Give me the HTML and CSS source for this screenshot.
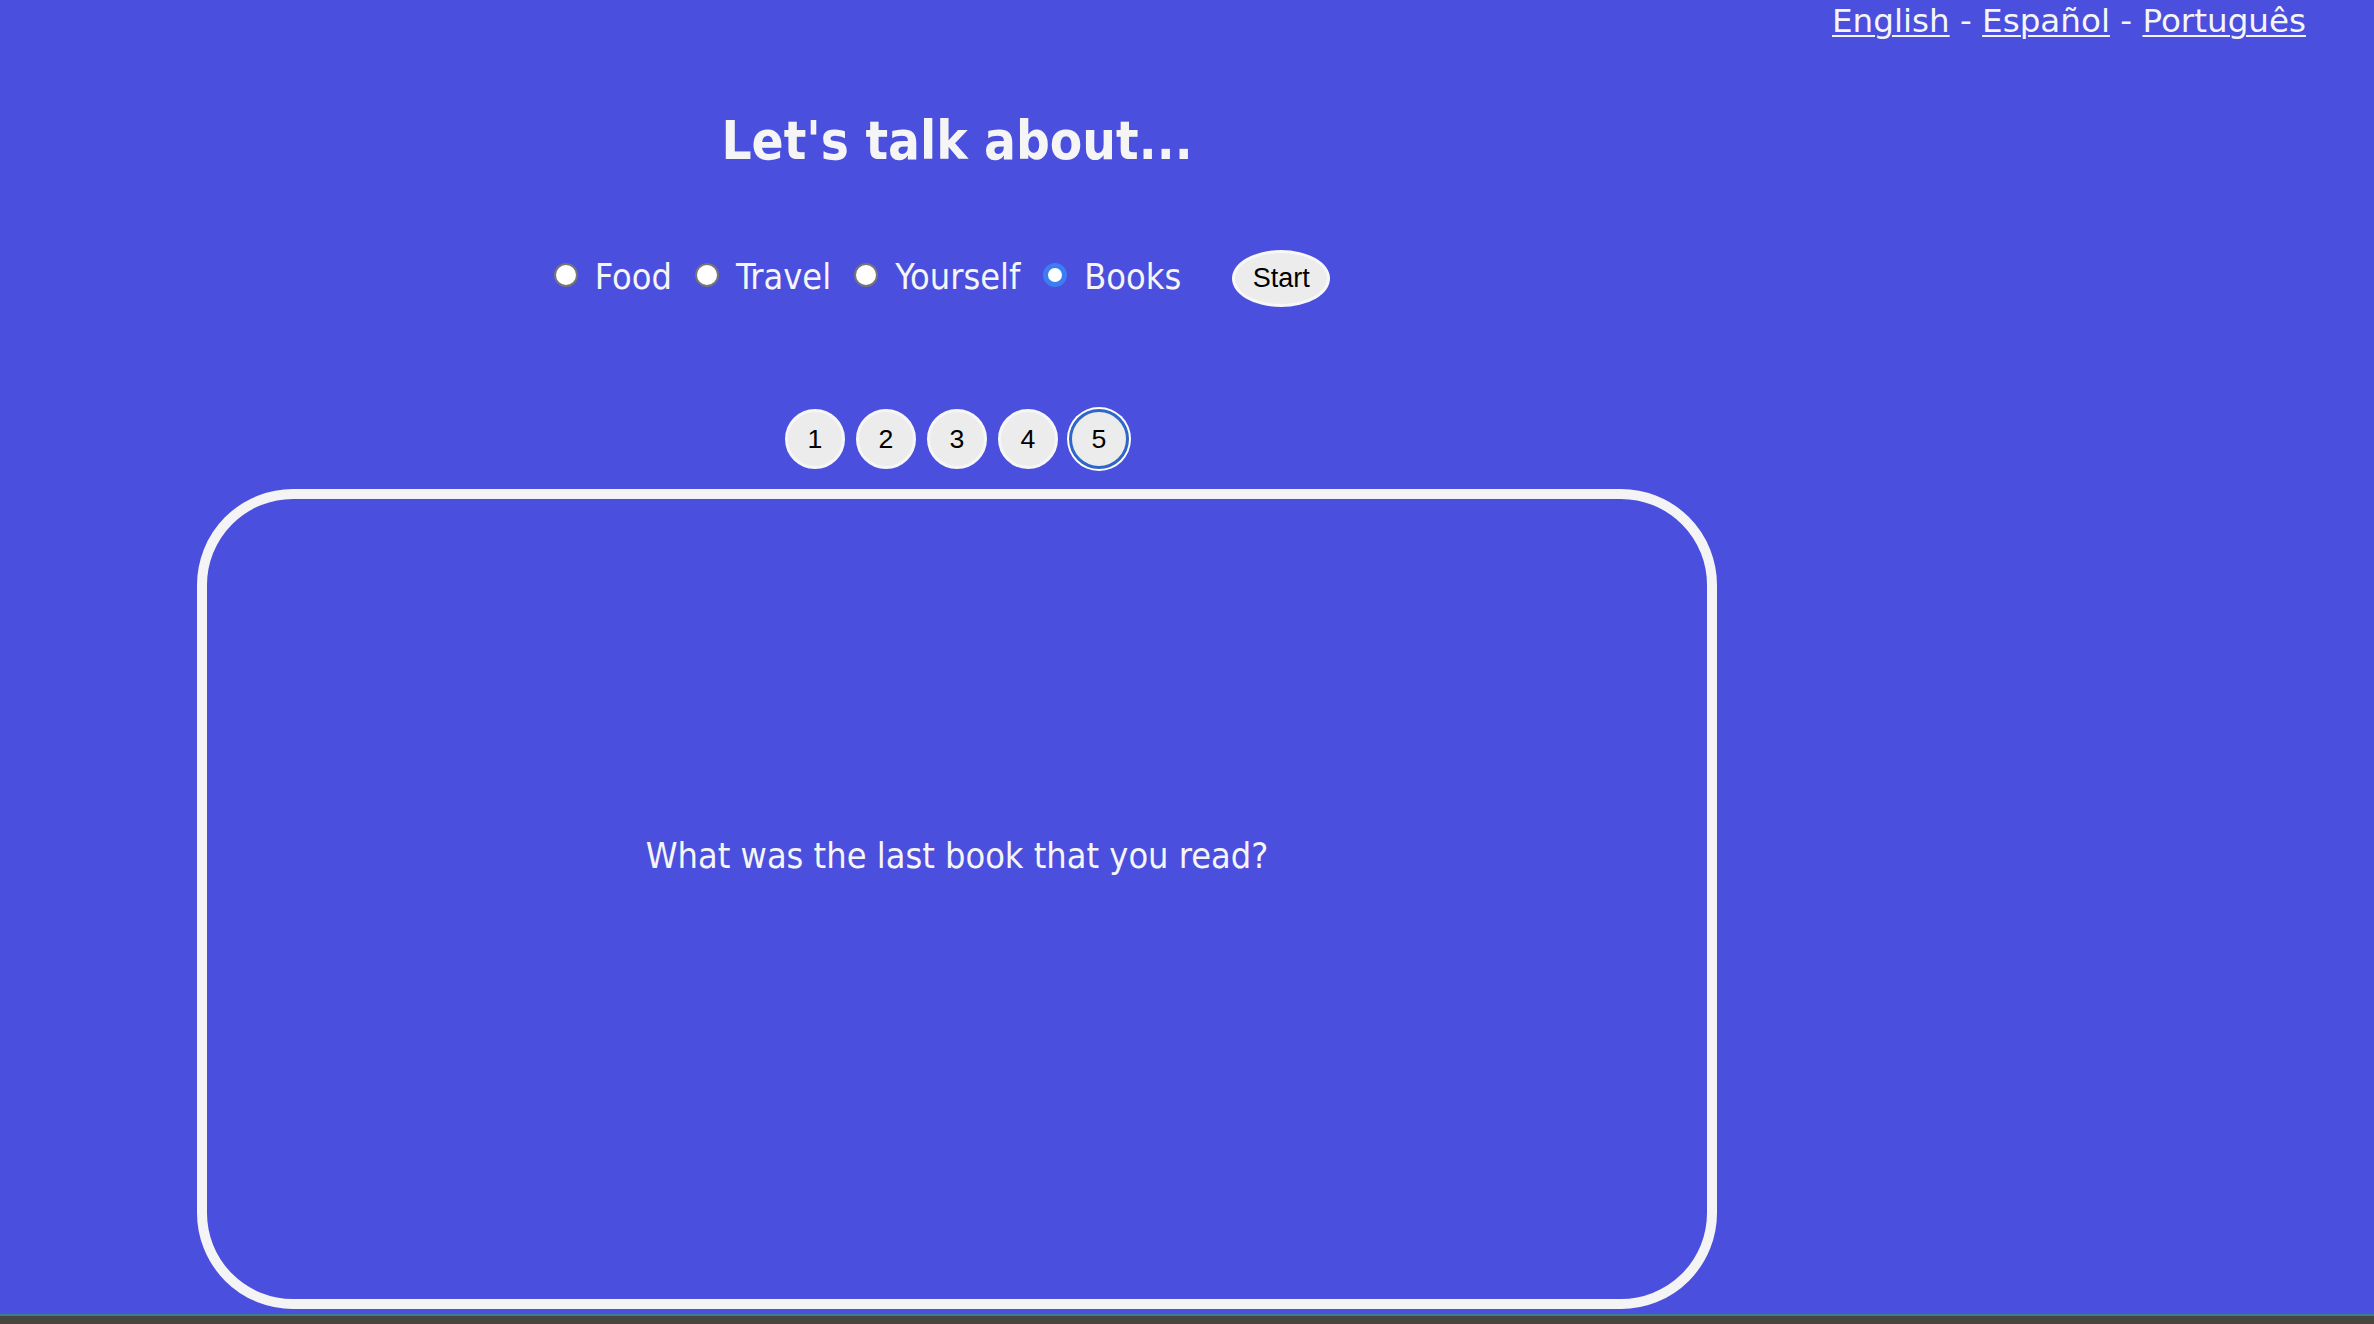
FILE: index.html
```html
<!DOCTYPE html>
<html lang="en">
<head>
<meta charset="utf-8">
<title>Let's talk about...</title>
<link rel="stylesheet" href="styles.css">
</head>
<body>
  <div class="lang">
    <a href="#">English</a> - <a href="#">Español</a> - <a href="#">Português</a>
  </div>
  <div class="main">
    <h1 class="title">Let's talk about...</h1>
    <form class="topics">
      <input type="radio" name="topic" id="t-food" class="radio">
      <label for="t-food" class="topic-label">Food</label>
      <input type="radio" name="topic" id="t-travel" class="radio">
      <label for="t-travel" class="topic-label">Travel</label>
      <input type="radio" name="topic" id="t-yourself" class="radio">
      <label for="t-yourself" class="topic-label">Yourself</label>
      <input type="radio" name="topic" id="t-books" class="radio radio-checked" checked>
      <label for="t-books" class="topic-label topic-last">Books</label>
      <button type="button" class="start">Start</button>
    </form>
    <div class="pages">
      <button type="button" class="page">1</button>
      <button type="button" class="page">2</button>
      <button type="button" class="page">3</button>
      <button type="button" class="page">4</button>
      <button type="button" class="page page-active">5</button>
    </div>
    <div class="card">
      <p class="question">What was the last book that you read?</p>
    </div>
  </div>
  <div class="dock"></div>
</body>
</html>
```
FILE: styles.css
```css
html, body {
  margin: 0;
  padding: 0;
}

body {
  background: #4b4fdd;
  color: #f5f5f5;
  font-family: "DejaVu Sans", Verdana, sans-serif;
  height: 1324px;
  overflow: hidden;
}

.lang {
  font-family: "DejaVu Sans", Verdana, sans-serif;
  font-size: 32.6px;
  line-height: 38px;
  padding-top: 2px;
  padding-right: 68px;
  text-align: right;
  color: #f5f5f5;
}

.lang a {
  color: #f5f5f5;
  text-decoration: underline;
  text-decoration-thickness: 2px;
  text-underline-offset: 3px;
}

.main {
  margin-left: 197px;
  width: 1520px;
}

.title {
  margin: 71px 0 0 0;
  font-family: "DejaVu Sans Condensed", "DejaVu Sans", sans-serif;
  font-stretch: condensed;
  font-weight: bold;
  font-size: 52.6px;
  line-height: 60px;
  text-align: center;
  color: #f5f5f5;
}

.topics {
  margin: 79px 0 0 0;
  padding-right: 30px;
  height: 57px;
  display: flex;
  align-items: center;
  justify-content: center;
}

.radio {
  appearance: none;
  -webkit-appearance: none;
  width: 24px;
  height: 24px;
  margin: 0 17px 7px 0;
  box-sizing: border-box;
  border: 2px solid #767676;
  border-radius: 50%;
  background: #ffffff;
}

.radio-checked {
  border: 5px solid #3b7df2;
  background: #ffffff;
}

.topic-label {
  font-family: "DejaVu Sans Condensed", "DejaVu Sans", sans-serif;
  font-stretch: condensed;
  font-size: 35.8px;
  margin: 0 23px 4px 0;
  color: #f5f5f5;
}

.topic-last {
  margin-right: 51px;
}

.start {
  width: 98px;
  height: 57px;
  box-sizing: border-box;
  border: 3px solid #f7f7f7;
  border-radius: 50%;
  background: #ececec;
  color: #000;
  font-family: "Liberation Sans", Arial, sans-serif;
  font-size: 27px;
  padding: 0;
}

.pages {
  margin-top: 102px;
  display: flex;
  justify-content: center;
  gap: 11px;
}

.page {
  width: 60px;
  height: 60px;
  box-sizing: border-box;
  border: 3px solid #f6f6f6;
  border-radius: 50%;
  background: #ececec;
  color: #000;
  font-family: "Liberation Sans", Arial, sans-serif;
  font-size: 26.67px;
  padding: 0;
}

.page-active {
  border: 3px solid #2f66c8;
  box-shadow: 0 0 0 2px #ffffff;
}

.card {
  margin-top: 20px;
  height: 820px;
  box-sizing: border-box;
  border: 10px solid #f4f4f4;
  border-radius: 96px;
  padding-top: 336px;
}

.question {
  margin: 0;
  font-family: "DejaVu Sans Condensed", "DejaVu Sans", sans-serif;
  font-stretch: condensed;
  font-size: 35.8px;
  text-align: center;
  color: #f5f5f5;
}

.dock {
  margin-top: 5px;
  height: 10px;
  box-sizing: border-box;
  border-top: 2px solid #3f7d8c;
  background: #47453f;
}
```
